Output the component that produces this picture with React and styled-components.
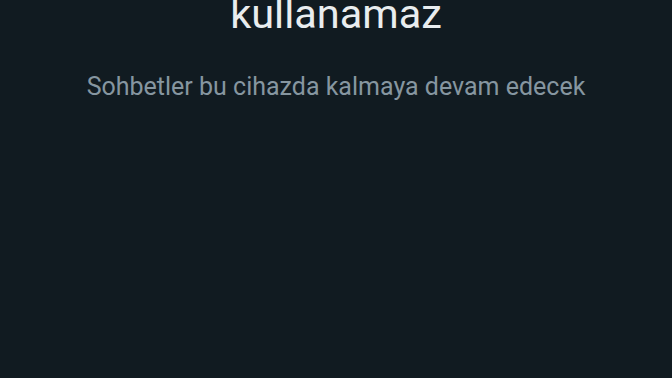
import React from "react";
import styled, { createGlobalStyle } from "styled-components";

const GlobalStyle = createGlobalStyle`
  html, body {
    margin: 0;
    padding: 0;
    background: #111b21;
    height: 100%;
    overflow: hidden;
  }
  #root {
    height: 100%;
  }
`;

const Screen = styled.div`
  height: 100vh;
  background: #111b21;
  display: flex;
  flex-direction: column;
  align-items: center;
  font-family: Roboto, "Noto Sans", sans-serif;
  overflow: hidden;
`;

const Title = styled.h1`
  margin: -11px 0 0;
  font-size: 41.5px;
  line-height: 50px;
  font-weight: 400;
  color: #e9edef;
  text-align: center;
`;

const Subtitle = styled.p`
  margin: 32px 0 0;
  font-size: 25px;
  line-height: 32px;
  color: #8696a0;
  text-align: center;
`;

export default function App() {
  return (
    <Screen>
      <GlobalStyle />
      <Title>kullanamaz</Title>
      <Subtitle>Sohbetler bu cihazda kalmaya devam edecek</Subtitle>
    </Screen>
  );
}
